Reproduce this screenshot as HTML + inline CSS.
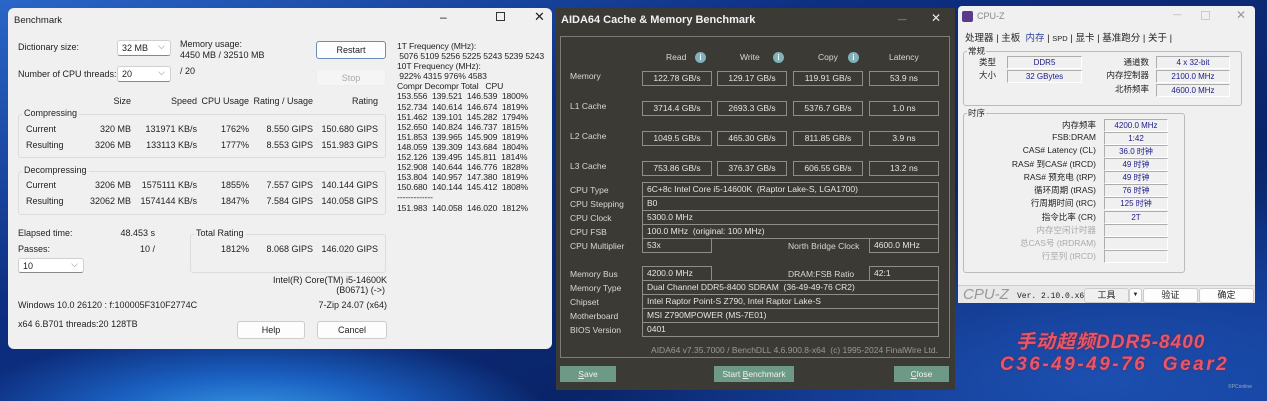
<!DOCTYPE html>
<html><head><meta charset="utf-8"><style>
*{margin:0;padding:0;box-sizing:border-box}
body{width:1267px;height:401px;overflow:hidden;position:relative;font-family:"Liberation Sans","Noto Sans CJK SC",sans-serif;
background:radial-gradient(ellipse 300px 90px at 250px 420px,#3aa0e8 0%,#1a5fc0 50%,transparent 100%),
radial-gradient(ellipse 500px 200px at 1100px 380px,#1c4fb0 0%,transparent 100%),
linear-gradient(160deg,#2a66c8 0%,#0d2f82 35%,#0a2468 70%,#123c98 100%);}
.a{position:absolute;white-space:nowrap}
.w1{position:absolute;left:8px;top:8px;width:544px;height:341px;background:#f0f0f0;border-radius:6px;font-size:9px;color:#222}
.r{text-align:right}
.cb{position:absolute;background:#fff;border:1px solid #d0d0d0;border-bottom:1px solid #888;border-radius:3px;font-size:9px;padding:2px 4px}
.cb:after{content:"⌵";position:absolute;right:5px;top:0;color:#777;font-size:9px}
.btn{position:absolute;background:#fdfdfd;border:1px solid #ccc;border-radius:3px;text-align:center;font-size:9px;line-height:16px}
.grp{position:absolute;border:1px solid #dcdcdc;border-radius:3px}
.mono{font-size:8.6px;line-height:10.1px;letter-spacing:-0.1px}
.w2{position:absolute;left:556px;top:8px;width:399px;height:382px;background:#3c3a35;color:#d8d8d0;font-size:8.5px}
.bx{position:absolute;border:1px solid #8f8e86;height:15px;line-height:13px;text-align:center;font-size:8.5px;color:#e6e6e0}
.bl{position:absolute;border:1px solid #8f8e86;height:15px;line-height:13px;padding-left:4px;font-size:8.5px;color:#e6e6e0}
.ic{position:absolute;width:11px;height:11px;border-radius:50%;background:#7fb2bb;color:#fff;font-size:8px;text-align:center;line-height:11px;font-weight:bold}
.gb{position:absolute;background:#6d9a86;color:#f0f0f0;text-align:center;font-size:8.5px;line-height:16px}
.w3{position:absolute;left:958px;top:6px;width:297px;height:297px;background:#f0f0f0;color:#222;font-size:8.5px;border-radius:4px}
.cz{position:absolute;background:#f0f0f0;border:1px solid #adadad;border-right-color:#fff;border-bottom-color:#fff;text-align:center;font-size:8px;height:13px;line-height:11px;color:#1a1a88}
.lb{position:absolute;text-align:right;font-size:8.5px;white-space:nowrap}
.red{position:absolute;color:#e8566a;font-weight:bold;font-style:italic;white-space:nowrap;text-shadow:0 0 2px #802030;letter-spacing:1px}
</style></head><body>

<div class="w1">
<div class="a" style="left:6px;top:7px;font-size:9.5px">Benchmark</div>
<div class="a" style="left:432px;top:2px;font-size:12px">–</div>
<div class="a" style="left:488px;top:4px;width:9px;height:9px;border:1px solid #333"></div>
<div class="a" style="left:526px;top:1px;font-size:13px">✕</div>

<div class="a" style="left:10px;top:34px">Dictionary size:</div>
<div class="cb" style="left:109px;top:32px;width:54px;height:16px">32 MB</div>
<div class="a" style="left:172px;top:31px">Memory usage:</div>
<div class="a" style="left:172px;top:42px">4450 MB / 32510 MB</div>
<div class="btn" style="left:308px;top:33px;width:70px;height:18px;border:1px solid #6b8cb8">Restart</div>
<div class="btn" style="left:308px;top:61px;width:70px;height:17px;background:#f5f5f5;border-color:#eee;color:#aaa">Stop</div>
<div class="a" style="left:10px;top:61px">Number of CPU threads:</div>
<div class="cb" style="left:109px;top:58px;width:54px;height:16px">20</div>
<div class="a" style="left:172px;top:58px">/ 20</div>

<div class="a r" style="left:60px;top:88px;width:63px">Size</div>
<div class="a r" style="left:120px;top:88px;width:69px">Speed</div>
<div class="a r" style="left:180px;top:88px;width:61px">CPU Usage</div>
<div class="a r" style="left:230px;top:88px;width:75px">Rating / Usage</div>
<div class="a r" style="left:300px;top:88px;width:70px">Rating</div>

<div class="grp" style="left:10px;top:106px;width:368px;height:44px"></div>
<div class="a" style="left:14px;top:100px;background:#f0f0f0;padding:0 2px">Compressing</div>
<div class="a" style="left:18px;top:116px">Current</div>
<div class="a r" style="left:60px;top:116px;width:63px">320 MB</div>
<div class="a r" style="left:120px;top:116px;width:69px">131971 KB/s</div>
<div class="a r" style="left:180px;top:116px;width:61px">1762%</div>
<div class="a r" style="left:230px;top:116px;width:75px">8.550 GIPS</div>
<div class="a r" style="left:300px;top:116px;width:70px">150.680 GIPS</div>
<div class="a" style="left:18px;top:132px">Resulting</div>
<div class="a r" style="left:60px;top:132px;width:63px">3206 MB</div>
<div class="a r" style="left:120px;top:132px;width:69px">133113 KB/s</div>
<div class="a r" style="left:180px;top:132px;width:61px">1777%</div>
<div class="a r" style="left:230px;top:132px;width:75px">8.553 GIPS</div>
<div class="a r" style="left:300px;top:132px;width:70px">151.983 GIPS</div>

<div class="grp" style="left:10px;top:163px;width:368px;height:44px"></div>
<div class="a" style="left:14px;top:157px;background:#f0f0f0;padding:0 2px">Decompressing</div>
<div class="a" style="left:18px;top:172px">Current</div>
<div class="a r" style="left:60px;top:172px;width:63px">3206 MB</div>
<div class="a r" style="left:120px;top:172px;width:69px">1575111 KB/s</div>
<div class="a r" style="left:180px;top:172px;width:61px">1855%</div>
<div class="a r" style="left:230px;top:172px;width:75px">7.557 GIPS</div>
<div class="a r" style="left:300px;top:172px;width:70px">140.144 GIPS</div>
<div class="a" style="left:18px;top:188px">Resulting</div>
<div class="a r" style="left:60px;top:188px;width:63px">32062 MB</div>
<div class="a r" style="left:120px;top:188px;width:69px">1574144 KB/s</div>
<div class="a r" style="left:180px;top:188px;width:61px">1847%</div>
<div class="a r" style="left:230px;top:188px;width:75px">7.584 GIPS</div>
<div class="a r" style="left:300px;top:188px;width:70px">140.058 GIPS</div>

<div class="a mono" style="left:389px;top:33px">1T Frequency (MHz):<br>&nbsp;5076 5109 5256 5225 5243 5239 5243<br>10T Frequency (MHz):<br>&nbsp;922% 4315 976% 4583<br>Compr Decompr Total&nbsp;&nbsp; CPU<br>153.556&nbsp; 139.521&nbsp; 146.539&nbsp; 1800%<br>152.734&nbsp; 140.614&nbsp; 146.674&nbsp; 1819%<br>151.462&nbsp; 139.101&nbsp; 145.282&nbsp; 1794%<br>152.650&nbsp; 140.824&nbsp; 146.737&nbsp; 1815%<br>151.853&nbsp; 139.965&nbsp; 145.909&nbsp; 1819%<br>148.059&nbsp; 139.309&nbsp; 143.684&nbsp; 1804%<br>152.126&nbsp; 139.495&nbsp; 145.811&nbsp; 1814%<br>152.908&nbsp; 140.644&nbsp; 146.776&nbsp; 1828%<br>153.804&nbsp; 140.957&nbsp; 147.380&nbsp; 1819%<br>150.680&nbsp; 140.144&nbsp; 145.412&nbsp; 1808%<br>-------------<br>151.983&nbsp; 140.058&nbsp; 146.020&nbsp; 1812%</div>

<div class="a" style="left:10px;top:220px">Elapsed time:</div>
<div class="a r" style="left:90px;top:220px;width:57px">48.453 s</div>
<div class="a" style="left:10px;top:236px">Passes:</div>
<div class="a r" style="left:90px;top:236px;width:57px">10 /</div>
<div class="cb" style="left:10px;top:250px;width:66px;height:15px">10</div>
<div class="grp" style="left:182px;top:226px;width:196px;height:39px"></div>
<div class="a" style="left:186px;top:220px;background:#f0f0f0;padding:0 2px">Total Rating</div>
<div class="a r" style="left:180px;top:236px;width:61px">1812%</div>
<div class="a r" style="left:230px;top:236px;width:75px">8.068 GIPS</div>
<div class="a r" style="left:300px;top:236px;width:70px">146.020 GIPS</div>
<div class="a r" style="left:200px;top:267px;width:179px">Intel(R) Core(TM) i5-14600K</div>
<div class="a r" style="left:200px;top:277px;width:177px">(B0671) (->)</div>
<div class="a" style="left:10px;top:292px">Windows 10.0 26120 : f:100005F310F2774C</div>
<div class="a r" style="left:200px;top:292px;width:179px">7-Zip 24.07 (x64)</div>
<div class="a" style="left:10px;top:311px">x64 6.B701 threads:20 128TB</div>
<div class="btn" style="left:229px;top:313px;width:68px;height:18px">Help</div>
<div class="btn" style="left:309px;top:313px;width:70px;height:18px">Cancel</div>
</div>

<div class="w2">
<div class="a" style="left:5px;top:6px;font-size:11px;font-weight:bold;color:#f2f2f2">AIDA64 Cache &amp; Memory Benchmark</div>
<div class="a" style="left:342px;top:6px;color:#aaa">—</div>
<div class="a" style="left:375px;top:3px;color:#eee;font-size:12px">✕</div>
<div class="a" style="left:4px;top:28px;width:390px;height:322px;border:1px solid #7d7c75"></div>
<div class="a" style="left:110px;top:44px">Read</div><div class="ic" style="left:139px;top:44px">i</div>
<div class="a" style="left:184px;top:44px">Write</div><div class="ic" style="left:217px;top:44px">i</div>
<div class="a" style="left:262px;top:44px">Copy</div><div class="ic" style="left:292px;top:44px">i</div>
<div class="a" style="left:333px;top:44px">Latency</div>

<div class="a" style="left:14px;top:63px">Memory</div>
<div class="bx" style="left:86px;top:63px;width:70px">122.78 GB/s</div><div class="bx" style="left:161px;top:63px;width:70px">129.17 GB/s</div><div class="bx" style="left:237px;top:63px;width:70px">119.91 GB/s</div><div class="bx" style="left:313px;top:63px;width:70px">53.9 ns</div>
<div class="a" style="left:14px;top:93px">L1 Cache</div>
<div class="bx" style="left:86px;top:93px;width:70px">3714.4 GB/s</div><div class="bx" style="left:161px;top:93px;width:70px">2693.3 GB/s</div><div class="bx" style="left:237px;top:93px;width:70px">5376.7 GB/s</div><div class="bx" style="left:313px;top:93px;width:70px">1.0 ns</div>
<div class="a" style="left:14px;top:123px">L2 Cache</div>
<div class="bx" style="left:86px;top:123px;width:70px">1049.5 GB/s</div><div class="bx" style="left:161px;top:123px;width:70px">465.30 GB/s</div><div class="bx" style="left:237px;top:123px;width:70px">811.85 GB/s</div><div class="bx" style="left:313px;top:123px;width:70px">3.9 ns</div>
<div class="a" style="left:14px;top:153px">L3 Cache</div>
<div class="bx" style="left:86px;top:153px;width:70px">753.86 GB/s</div><div class="bx" style="left:161px;top:153px;width:70px">376.37 GB/s</div><div class="bx" style="left:237px;top:153px;width:70px">606.55 GB/s</div><div class="bx" style="left:313px;top:153px;width:70px">13.2 ns</div>

<div class="a" style="left:14px;top:177px">CPU Type</div><div class="bl" style="left:86px;top:174px;width:297px">6C+8c Intel Core i5-14600K&nbsp; (Raptor Lake-S, LGA1700)</div>
<div class="a" style="left:14px;top:191px">CPU Stepping</div><div class="bl" style="left:86px;top:188px;width:297px">B0</div>
<div class="a" style="left:14px;top:205px">CPU Clock</div><div class="bl" style="left:86px;top:202px;width:297px">5300.0 MHz</div>
<div class="a" style="left:14px;top:219px">CPU FSB</div><div class="bl" style="left:86px;top:216px;width:297px">100.0 MHz&nbsp; (original: 100 MHz)</div>
<div class="a" style="left:14px;top:233px">CPU Multiplier</div><div class="bl" style="left:86px;top:230px;width:70px">53x</div>
<div class="a" style="left:232px;top:233px">North Bridge Clock</div><div class="bl" style="left:313px;top:230px;width:70px">4600.0 MHz</div>

<div class="a" style="left:14px;top:261px">Memory Bus</div><div class="bl" style="left:86px;top:258px;width:70px">4200.0 MHz</div>
<div class="a" style="left:232px;top:261px">DRAM:FSB Ratio</div><div class="bl" style="left:313px;top:258px;width:70px">42:1</div>
<div class="a" style="left:14px;top:275px">Memory Type</div><div class="bl" style="left:86px;top:272px;width:297px">Dual Channel DDR5-8400 SDRAM&nbsp; (36-49-49-76 CR2)</div>
<div class="a" style="left:14px;top:289px">Chipset</div><div class="bl" style="left:86px;top:286px;width:297px">Intel Raptor Point-S Z790, Intel Raptor Lake-S</div>
<div class="a" style="left:14px;top:303px">Motherboard</div><div class="bl" style="left:86px;top:300px;width:297px">MSI Z790MPOWER (MS-7E01)</div>
<div class="a" style="left:14px;top:317px">BIOS Version</div><div class="bl" style="left:86px;top:314px;width:297px">0401</div>
<div class="a r" style="left:80px;top:337px;width:302px;color:#9a9a92">AIDA64 v7.35.7000 / BenchDLL 4.6.900.8-x64&nbsp; (c) 1995-2024 FinalWire Ltd.</div>
<div class="gb" style="left:4px;top:358px;width:56px"><u>S</u>ave</div>
<div class="gb" style="left:158px;top:358px;width:80px">Start <u>B</u>enchmark</div>
<div class="gb" style="left:338px;top:358px;width:55px"><u>C</u>lose</div>
</div>

<div class="w3">
<div class="a" style="left:4px;top:5px;width:11px;height:11px;background:#5a3b8a;border-radius:2px"></div>
<div class="a" style="left:19px;top:5px;color:#888;font-size:9px">CPU-Z</div>
<div class="a" style="left:215px;top:3px;color:#aaa">—</div>
<div class="a" style="left:243px;top:5px;width:9px;height:9px;border:1px solid #ccc"></div>
<div class="a" style="left:278px;top:2px;color:#999;font-size:12px">✕</div>
<div class="a" style="left:7px;top:24px;font-size:9.5px">处理器 | 主板 &nbsp;<span style="color:#2a3f9a">内存</span> | <span style="font-size:7.5px">SPD</span> | 显卡 | 基准跑分 | 关于 |</div>
<div class="grp" style="left:5px;top:45px;width:279px;height:55px;border-color:#bbb"></div>
<div class="a" style="left:9px;top:39px;background:#f0f0f0;padding:0 1px">常规</div>
<div class="lb" style="left:10px;top:50px;width:28px">类型</div><div class="cz" style="left:49px;top:50px;width:75px">DDR5</div>
<div class="lb" style="left:10px;top:63px;width:28px">大小</div><div class="cz" style="left:49px;top:64px;width:75px">32 GBytes</div>
<div class="lb" style="left:130px;top:50px;width:61px">通道数</div><div class="cz" style="left:198px;top:50px;width:74px">4 x 32-bit</div>
<div class="lb" style="left:130px;top:63px;width:61px">内存控制器</div><div class="cz" style="left:198px;top:64px;width:74px">2100.0 MHz</div>
<div class="lb" style="left:130px;top:77px;width:61px">北桥频率</div><div class="cz" style="left:198px;top:78px;width:74px">4600.0 MHz</div>
<div class="grp" style="left:5px;top:107px;width:222px;height:160px;border-color:#bbb"></div>
<div class="a" style="left:9px;top:101px;background:#f0f0f0;padding:0 1px">时序</div>
<div class="lb" style="left:20px;top:113px;width:118px">内存频率</div><div class="cz" style="left:146px;top:113px;width:64px">4200.0 MHz</div>
<div class="lb" style="left:20px;top:126px;width:118px">FSB:DRAM</div><div class="cz" style="left:146px;top:126px;width:64px">1:42</div>
<div class="lb" style="left:20px;top:139px;width:118px">CAS# Latency (CL)</div><div class="cz" style="left:146px;top:139px;width:64px">36.0 时钟</div>
<div class="lb" style="left:20px;top:152px;width:118px">RAS# 到CAS# (tRCD)</div><div class="cz" style="left:146px;top:152px;width:64px">49 时钟</div>
<div class="lb" style="left:20px;top:165px;width:118px">RAS# 预充电 (tRP)</div><div class="cz" style="left:146px;top:165px;width:64px">49 时钟</div>
<div class="lb" style="left:20px;top:178px;width:118px">循环周期 (tRAS)</div><div class="cz" style="left:146px;top:178px;width:64px">76 时钟</div>
<div class="lb" style="left:20px;top:191px;width:118px">行周期时间 (tRC)</div><div class="cz" style="left:146px;top:191px;width:64px">125 时钟</div>
<div class="lb" style="left:20px;top:205px;width:118px">指令比率 (CR)</div><div class="cz" style="left:146px;top:205px;width:64px">2T</div>
<div class="lb" style="left:20px;top:218px;width:118px;color:#aaa">内存空闲计时器</div><div class="cz" style="left:146px;top:218px;width:64px"></div>
<div class="lb" style="left:20px;top:231px;width:118px;color:#aaa">总CAS号 (tRDRAM)</div><div class="cz" style="left:146px;top:231px;width:64px"></div>
<div class="lb" style="left:20px;top:244px;width:118px;color:#aaa">行至列 (tRCD)</div><div class="cz" style="left:146px;top:244px;width:64px"></div>
<div class="a" style="left:0;top:279px;width:297px;height:18px;background:#e8e8e8;border-top:1px solid #ccc"></div>
<div class="a" style="left:5px;top:280px;font-size:15px;font-style:italic;color:#999">CPU-Z</div>
<div class="a" style="left:59px;top:286px;font-size:8px;font-family:'Liberation Mono',monospace">Ver. 2.10.0.x64</div>
<div class="btn" style="left:126px;top:282px;width:45px;height:15px;line-height:13px;background:#f0f0f0">工具</div>
<div class="btn" style="left:171px;top:282px;width:13px;height:15px;line-height:13px;font-size:6px">▼</div>
<div class="btn" style="left:185px;top:282px;width:55px;height:15px;line-height:13px">验证</div>
<div class="btn" style="left:241px;top:282px;width:55px;height:15px;line-height:13px">确定</div>
</div>

<div class="red" style="left:1016px;top:327px;font-size:19px">手动超频DDR5-8400</div>
<div class="red" style="left:1000px;top:354px;font-size:19px;letter-spacing:2.5px">C36-49-49-76&nbsp; Gear2</div>
<div class="a" style="left:1228px;top:384px;font-size:5px;color:#9ab">©PConline</div>
</body></html>
